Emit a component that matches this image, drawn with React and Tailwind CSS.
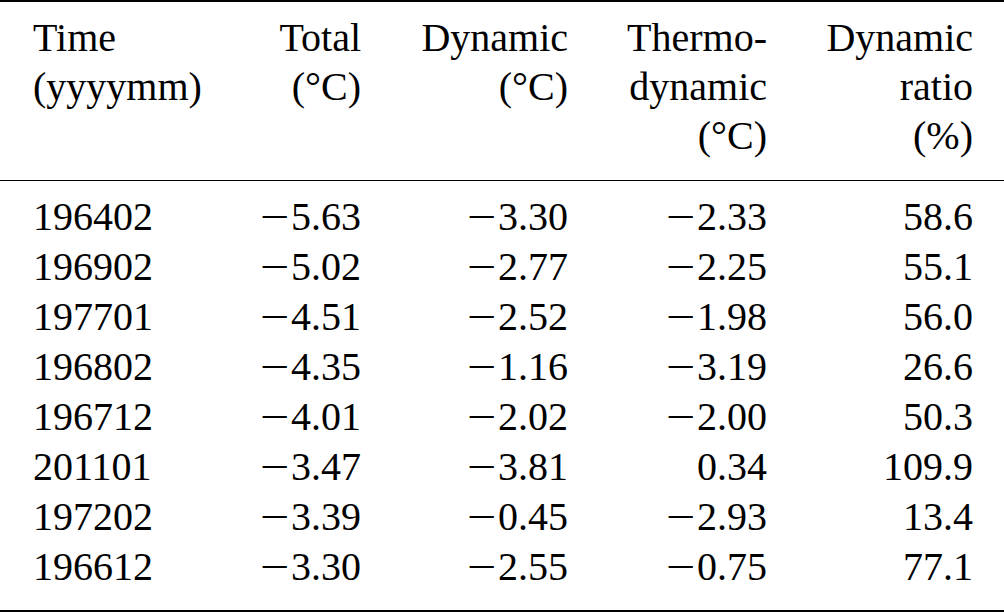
const rows = [
  ['196402', '−5.63', '−3.30', '−2.33', '58.6'],
  ['196902', '−5.02', '−2.77', '−2.25', '55.1'],
  ['197701', '−4.51', '−2.52', '−1.98', '56.0'],
  ['196802', '−4.35', '−1.16', '−3.19', '26.6'],
  ['196712', '−4.01', '−2.02', '−2.00', '50.3'],
  ['201101', '−3.47', '−3.81', '0.34', '109.9'],
  ['197202', '−3.39', '−0.45', '−2.93', '13.4'],
  ['196612', '−3.30', '−2.55', '−0.75', '77.1'],
];

const cols = 'grid grid-cols-[170px_158px_207px_199px_206px] pl-[33px] pr-[31px]';

// math-style minus: wider than the text one, as in the typeset table
const Num = ({ v }) =>
  v.startsWith('−') ? (
    <span className="whitespace-nowrap">
      <span className="inline-block w-[31px] text-left">
        <span className="inline-block origin-left scale-x-[1.3]">−</span>
      </span>
      {v.slice(1)}
    </span>
  ) : (
    v
  );

export default function App() {
  return (
    <div className="w-[1004px] h-[614px] bg-white text-black text-[40px] overflow-hidden font-['Liberation_Serif','Times_New_Roman',serif]">
      <div className="border-t-[2.5px] border-black" />

      {/* Header */}
      <div className={`${cols} pt-[10.5px] pb-[20px] leading-[49px]`}>
        <div>
          <div>Time</div>
          <div>(yyyymm)</div>
        </div>
        <div className="text-right">
          <div>Total</div>
          <div>(°C)</div>
        </div>
        <div className="text-right">
          <div>Dynamic</div>
          <div>(°C)</div>
        </div>
        <div className="text-right">
          <div>Thermo-</div>
          <div>dynamic</div>
          <div>(°C)</div>
        </div>
        <div className="text-right">
          <div>Dynamic</div>
          <div>ratio</div>
          <div>(%)</div>
        </div>
      </div>

      <div className="border-t-[1.5px] border-black" />

      {/* Body */}
      <div className={`${cols} pt-[11px] pb-[18px] leading-[50px]`}>
        {rows.map((r) => (
          <div key={r[0]} className="contents">
            <div>{r[0]}</div>
            <div className="text-right"><Num v={r[1]} /></div>
            <div className="text-right"><Num v={r[2]} /></div>
            <div className="text-right"><Num v={r[3]} /></div>
            <div className="text-right"><Num v={r[4]} /></div>
          </div>
        ))}
      </div>

      <div className="border-t-[2.5px] border-black" />
    </div>
  );
}
